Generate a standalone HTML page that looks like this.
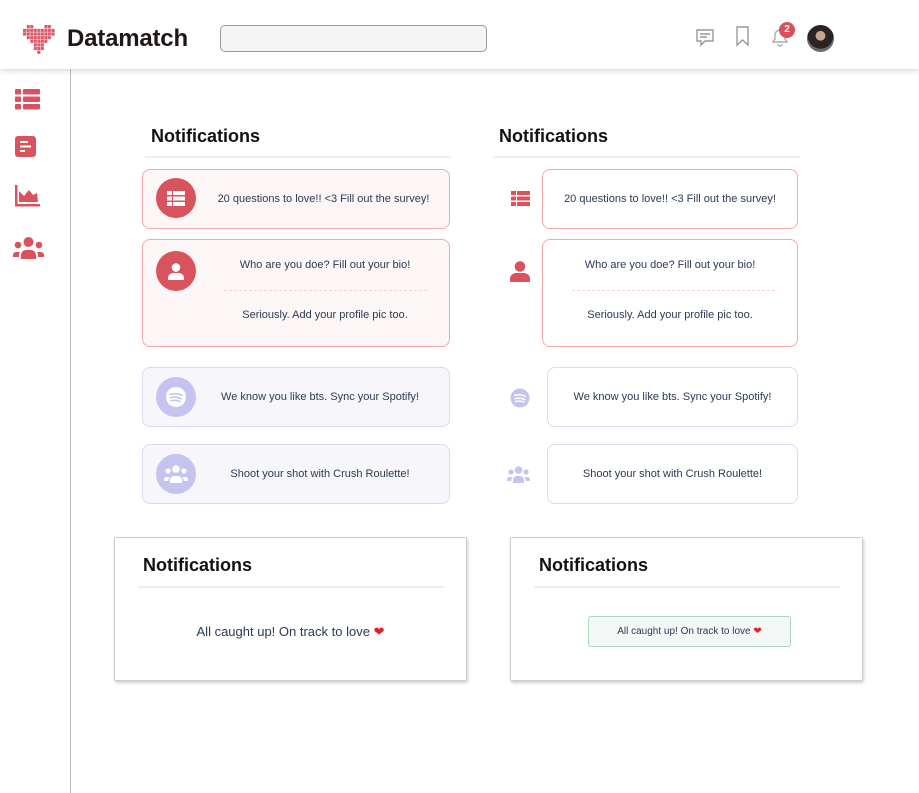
<!DOCTYPE html>
<html><head><meta charset="utf-8"><style>
*{margin:0;padding:0;box-sizing:border-box}
body{width:919px;height:793px;background:#fff;font-family:"Liberation Sans",sans-serif;position:relative;overflow:hidden;color:#2b3a55}
.abs{position:absolute}
.hdr{left:0;top:0;width:919px;height:69px;background:#fff;box-shadow:0 2px 5px rgba(0,0,0,.15);z-index:2}
.logo{left:67px;top:25px;font-size:24px;font-weight:bold;color:#231616;letter-spacing:-.2px}
.search{left:220px;top:25px;width:267px;height:27px;border:1px solid #9a9a9a;border-radius:5px;background:#f5f5f5}
.vline{left:70px;top:69px;width:1px;height:724px;background:#bbb}
.title{font-size:18px;font-weight:bold;color:#111}
.hr{height:2px;background:#eee}
.card{border-radius:8px;font-size:11px;color:#2b3a55;display:flex;align-items:center;justify-content:center}
.red{background:#fdf6f6;border:1px solid #f4a8a3}
.pur{background:#f6f6fb;border:1px solid #dcdaf0}
.wpur{background:#fff;border:1px solid #dcdaf0}
.wred{background:#fff;border:1px solid #f4a8a3}
.circ{width:40px;height:40px;border-radius:50%;display:flex;align-items:center;justify-content:center}
.box{background:#fff;border:1px solid #ccc;border-radius:2px;box-shadow:1px 2px 3px rgba(0,0,0,.2)}
</style></head><body>
<div class="abs hdr">
<svg class="abs" style="left:23px;top:25px" width="32" height="29" viewBox="0 0 30 26.5" preserveAspectRatio="none">
<g fill="#dd5a68">
<rect x="3.3" y="0" width="6.6" height="3.3"/><rect x="19.8" y="0" width="6.6" height="3.3"/>
<rect x="0" y="3.3" width="29.7" height="6.6"/>
<rect x="3.3" y="9.9" width="23.1" height="3.3"/>
<rect x="6.6" y="13.2" width="16.5" height="3.3"/>
<rect x="9.9" y="16.5" width="9.9" height="6.6"/>
<rect x="13.2" y="23.1" width="3.3" height="3.3"/>
</g>
<g stroke="#fff" stroke-width=".6" opacity=".7">
<path d="M3.3 0V27M6.6 0V27M9.9 0V27M13.2 0V27M16.5 0V27M19.8 0V27M23.1 0V27M26.4 0V27M0 3.3H30M0 6.6H30M0 9.9H30M0 13.2H30M0 16.5H30M0 19.8H30M0 23.1H30"/>
</g>
</svg>
<div class="abs logo">Datamatch</div>
<div class="abs search"></div>
<svg class="abs" style="left:695px;top:28px" width="20" height="20" fill="none" stroke="#999" stroke-width="1.4"><path d="M2 2h16v11H10l-4 4v-4H2z"/><path d="M5 6h10M5 9h7"/></svg>
<svg class="abs" style="left:735px;top:26px" width="16" height="21" fill="none" stroke="#999" stroke-width="1.4"><path d="M2 1h11v18l-5.5-5L2 19z"/></svg>
<svg class="abs" style="left:769px;top:26px" width="22" height="22" fill="none" stroke="#aaa" stroke-width="1.4"><path d="M4 16h14l-2-3V9a5 5 0 0 0-10 0v4z"/><path d="M9 18a2 2 0 0 0 4 0"/></svg>
<div class="abs" style="left:779px;top:22px;width:16px;height:16px;border-radius:50%;background:#db4f5a;color:#fff;font-size:10px;font-weight:bold;text-align:center;line-height:16px">2</div>
<div class="abs" style="left:807px;top:25px;width:27px;height:27px;border-radius:50%;background:radial-gradient(circle at 50% 40%,#c9a38c 0 22%,#2a2424 24% 60%,#6f6a68 62%)"></div>
</div>
<div class="abs vline"></div>
<!-- sidebar -->
<svg class="abs" style="left:15px;top:89px" width="25" height="21" fill="#d9535f"><rect x="0" y="0" width="6" height="5.5" rx="1"/><rect x="8" y="0" width="17" height="5.5" rx="1"/><rect x="0" y="7.5" width="6" height="5.5" rx="1"/><rect x="8" y="7.5" width="17" height="5.5" rx="1"/><rect x="0" y="15" width="6" height="5.5" rx="1"/><rect x="8" y="15" width="17" height="5.5" rx="1"/></svg>
<svg class="abs" style="left:15px;top:136px" width="22" height="22"><rect width="21" height="21" rx="3" fill="#d9535f"/><path d="M5 6h8M5 10.5h11M5 15h5" stroke="#fff" stroke-width="2"/></svg>
<svg class="abs" style="left:15px;top:185px" width="25" height="22" fill="#d9535f"><path d="M0 0h2.5v19H25v2.5H0z"/><path d="M4 17V6l5 5 5-6 4 5 4-2 1 9z"/></svg>
<svg class="abs" style="left:13px;top:237px" width="31" height="23" fill="#d9535f"><circle cx="15.5" cy="5" r="5"/><circle cx="5" cy="8" r="3.3"/><circle cx="26" cy="8" r="3.3"/><path d="M8 22v-4a5 5 0 0 1 5-5h5a5 5 0 0 1 5 5v4z"/><path d="M0 20v-2a3 3 0 0 1 3-3h4a6 6 0 0 0-1 4v1z"/><path d="M31 20v-2a3 3 0 0 0-3-3h-4a6 6 0 0 1 1 4v1z"/></svg>

<!-- panel 1 -->
<div class="abs title" style="left:151px;top:126px">Notifications</div>
<div class="abs hr" style="left:145px;top:156px;width:306px"></div>
<div class="abs card red" style="left:142px;top:169px;width:308px;height:60px;padding-left:55px">20 questions to love!! &lt;3 Fill out the survey!</div>
<div class="abs circ" style="left:156px;top:178px;background:#d9535f"><svg width="18" height="15" fill="#fff"><rect x="0" y="0" width="5" height="4"/><rect x="6" y="0" width="12" height="4"/><rect x="0" y="5.5" width="5" height="4"/><rect x="6" y="5.5" width="12" height="4"/><rect x="0" y="11" width="5" height="4"/><rect x="6" y="11" width="12" height="4"/></svg></div>
<div class="abs card red" style="left:142px;top:239px;width:308px;height:108px;display:block"></div>
<div class="abs" style="left:200px;top:259px;width:250px;text-align:center;font-size:11px">Who are you doe? Fill out your bio!</div>
<div class="abs" style="left:224px;top:290px;width:203px;border-top:1px dashed #f8d3d0"></div>
<div class="abs" style="left:200px;top:309px;width:250px;text-align:center;font-size:11px">Seriously. Add your profile pic too.</div>
<div class="abs circ" style="left:156px;top:251px;background:#d9535f"><svg width="16" height="17" fill="#fff"><circle cx="8" cy="4.5" r="4.3"/><path d="M0 17v-2a5 5 0 0 1 5-5h6a5 5 0 0 1 5 5v2z"/></svg></div>
<div class="abs card pur" style="left:142px;top:367px;width:308px;height:60px;padding-left:48px">We know you like bts. Sync your Spotify!</div>
<div class="abs circ" style="left:156px;top:377px;background:#c5c3f0"><svg width="22" height="22"><circle cx="11" cy="11" r="10" fill="#fff"/><path d="M5 8.5q6-2 12 1M5.5 11.7q5.5-1.6 10.5 1M6 14.7q4.5-1.2 9 .8" stroke="#c5c3f0" stroke-width="1.6" fill="none" stroke-linecap="round"/></svg></div>
<div class="abs card pur" style="left:142px;top:444px;width:308px;height:60px;padding-left:48px">Shoot your shot with Crush Roulette!</div>
<div class="abs circ" style="left:156px;top:454px;background:#c5c3f0"><svg width="24" height="18" fill="#fff"><circle cx="12" cy="4" r="3.8"/><circle cx="4" cy="6" r="2.6"/><circle cx="20" cy="6" r="2.6"/><path d="M6 18v-3a4 4 0 0 1 4-4h4a4 4 0 0 1 4 4v3z"/><path d="M0 16v-1.5a2.5 2.5 0 0 1 2.5-2.5h3a5 5 0 0 0-1 3v1z"/><path d="M24 16v-1.5a2.5 2.5 0 0 0-2.5-2.5h-3a5 5 0 0 1 1 3v1z"/></svg></div>

<!-- panel 2 -->
<div class="abs title" style="left:499px;top:126px">Notifications</div>
<div class="abs hr" style="left:493px;top:156px;width:307px"></div>
<svg class="abs" style="left:511px;top:191px" width="19" height="15" fill="#d9535f"><rect x="0" y="0" width="5" height="4"/><rect x="6" y="0" width="13" height="4"/><rect x="0" y="5.5" width="5" height="4"/><rect x="6" y="5.5" width="13" height="4"/><rect x="0" y="11" width="5" height="4"/><rect x="6" y="11" width="13" height="4"/></svg>
<div class="abs card wred" style="left:542px;top:169px;width:256px;height:60px">20 questions to love!! &lt;3 Fill out the survey!</div>
<svg class="abs" style="left:510px;top:261px" width="20" height="21" fill="#d9535f"><circle cx="10" cy="5.5" r="5.3"/><path d="M0 21v-3a6 6 0 0 1 6-6h8a6 6 0 0 1 6 6v3z"/></svg>
<div class="abs card wred" style="left:542px;top:239px;width:256px;height:108px;display:block"></div>
<div class="abs" style="left:542px;top:259px;width:256px;text-align:center;font-size:11px">Who are you doe? Fill out your bio!</div>
<div class="abs" style="left:572px;top:290px;width:203px;border-top:1px dashed #f8d3d0"></div>
<div class="abs" style="left:542px;top:309px;width:256px;text-align:center;font-size:11px">Seriously. Add your profile pic too.</div>
<svg class="abs" style="left:510px;top:388px" width="20" height="20"><circle cx="10" cy="10" r="9.5" fill="#c5c3f0"/><path d="M4.5 7.5q6-2 11 1M5 10.7q5-1.5 10 1M5.5 13.5q4.5-1.1 8.5.7" stroke="#fff" stroke-width="1.5" fill="none" stroke-linecap="round"/></svg>
<div class="abs card wpur" style="left:547px;top:367px;width:251px;height:60px">We know you like bts. Sync your Spotify!</div>
<svg class="abs" style="left:507px;top:466px" width="23" height="17" fill="#c5c3f0"><circle cx="11.5" cy="4" r="3.8"/><circle cx="4" cy="6" r="2.6"/><circle cx="19" cy="6" r="2.6"/><path d="M6 17v-3a4 4 0 0 1 4-4h3a4 4 0 0 1 4 4v3z"/><path d="M0 15v-1.5a2.5 2.5 0 0 1 2.5-2.5h3a5 5 0 0 0-1 3v1z"/><path d="M23 15v-1.5a2.5 2.5 0 0 0-2.5-2.5h-3a5 5 0 0 1 1 3v1z"/></svg>
<div class="abs card wpur" style="left:547px;top:444px;width:251px;height:60px">Shoot your shot with Crush Roulette!</div>

<!-- bottom boxes -->
<div class="abs box" style="left:114px;top:537px;width:353px;height:144px"></div>
<div class="abs title" style="left:143px;top:555px">Notifications</div>
<div class="abs hr" style="left:138px;top:586px;width:306px"></div>
<div class="abs" style="left:114px;top:624px;width:353px;text-align:center;font-size:13px">All caught up! On track to love <span style="color:#e0202c">❤</span></div>

<div class="abs box" style="left:510px;top:537px;width:353px;height:144px"></div>
<div class="abs title" style="left:539px;top:555px">Notifications</div>
<div class="abs hr" style="left:534px;top:586px;width:306px"></div>
<div class="abs" style="left:588px;top:616px;width:203px;height:31px;background:#f3f8f6;border:1px solid #a6dcbc;border-radius:3px;font-size:10px;text-align:center;line-height:29px">All caught up! On track to love <span style="color:#e0202c">❤</span></div>
</body></html>
